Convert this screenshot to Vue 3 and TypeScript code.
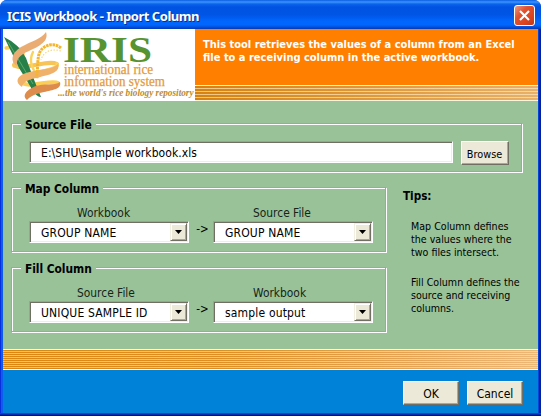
<script setup lang="ts">
import { ref } from 'vue'

interface ColumnSelect {
  label: string
  value: string
}
interface MappingGroup {
  title: string
  from: ColumnSelect
  to: ColumnSelect
}

const sourcePath = ref('E:\\SHU\\sample workbook.xls')

const groups = ref<MappingGroup[]>([
  {
    title: 'Map Column',
    from: { label: 'Workbook', value: 'GROUP NAME' },
    to: { label: 'Source File', value: 'GROUP NAME' },
  },
  {
    title: 'Fill Column',
    from: { label: 'Source File', value: 'UNIQUE SAMPLE ID' },
    to: { label: 'Workbook', value: 'sample output' },
  },
])

const tips: string[][] = [
  ['Map Column defines', 'the values where the', 'two files intersect.'],
  ['Fill Column defines the', 'source and receiving', 'columns.'],
]
</script>

<template>
  <div class="window">
    <header class="titlebar">
      <span class="title">ICIS Workbook - Import Column</span>
      <button class="close" aria-label="Close">
        <svg width="19" height="19" viewBox="0 0 19 19">
          <path d="M5 5 L14 14 M14 5 L5 14" stroke="#fff" stroke-width="2.1" />
        </svg>
      </button>
    </header>

    <main class="content">
      <section class="banner">
        <svg class="logo" width="192" height="72" viewBox="3 29 192 72">
          <g fill="none" stroke-linecap="round">
            <path d="M6 48 C16 46 24 50 23 55 C21 60 13 61 14 66" stroke="#fbcf55" stroke-width="3.4" />
            <path d="M14 65 C20 72 47 59 57 64" stroke="#f7c458" stroke-width="4" />
            <path d="M57 64 C62 70 20 73 20 80" stroke="#fbd35c" stroke-width="3.4" />
            <path d="M20 81 C27 90 50 79 58 83" stroke="#fbcf55" stroke-width="4" />
            <path d="M33 52 C29 60 31 67 38 77" stroke="#fbd35c" stroke-width="2.4" />
          </g>
          <path d="M4 37 Q19 44 26 58 Q32 75 41 97 Q37 97 33 91 Q26 79 19 68 Q12 53 4 37Z" fill="#26804a" />
          <path d="M8 42 L33 84" stroke="#79b878" stroke-width=".7" />
          <path d="M46 32 C49 41 40 46 29 51 C19 55 16 60 17 66 C10 62 11 53 21 47 C32 41 41 39 46 32Z" fill="#eaac72" />
          <path d="M58 64 C61 73 48 75 36 78 C26 80 23 83 22 87 C15 83 16 76 26 73 C38 69 52 70 58 64Z" fill="#f0b26a" />
          <path d="M60 82 C62 89 53 90 44 92 C35 94 31 96 27 100 C21 95 28 89 36 86 C44 83 54 86 60 82Z" fill="#dd8c4c" />
          <path d="M61 48 C55 43 47 44 42 49 C36 55 39 67 36 78" fill="none" stroke="#f5b52d" stroke-width="3" stroke-dasharray="2.6 .7" />
          <path d="M61 51 C51 48 43 52 41 60" fill="none" stroke="#f9d979" stroke-width="1.2" stroke-dasharray="1.5 1.5" />
          <text class="logo-name" x="63" y="62" textLength="89" lengthAdjust="spacingAndGlyphs">IRIS</text>
          <text class="logo-line" x="64" y="74" textLength="89" lengthAdjust="spacingAndGlyphs">international rice</text>
          <text class="logo-line" x="64" y="86" textLength="101" lengthAdjust="spacingAndGlyphs">information system</text>
          <text class="logo-tag" x="58" y="95.5" textLength="135.5" lengthAdjust="spacingAndGlyphs">...the world's rice biology repository</text>
        </svg>
        <div class="banner-side">
          <p class="intro">This tool retrieves the values of a column from an Excel<br />file to a receiving column in the active workbook.</p>
          <div class="stripes stripes-top"></div>
        </div>
      </section>

      <section class="form">
        <div class="group source-group">
          <span class="legend">Source File</span>
          <div class="source-row">
            <input v-model="sourcePath" class="field path" type="text" aria-label="Source File" />
            <button class="btn browse">Browse</button>
          </div>
        </div>

        <div class="columns">
          <div class="mappings">
            <div v-for="g in groups" :key="g.title" class="group map-group">
              <span class="legend">{{ g.title }}</span>
              <div class="map-row">
                <div class="picker">
                  <span class="picker-label">{{ g.from.label }}</span>
                  <div class="field combo" role="combobox">
                    <span>{{ g.from.value }}</span>
                    <i class="drop"><svg width="7" height="4" viewBox="0 0 7 4"><path d="M0 0H7L3.5 4Z" /></svg></i>
                  </div>
                </div>
                <span class="arrow">-&gt;</span>
                <div class="picker target">
                  <span class="picker-label">{{ g.to.label }}</span>
                  <div class="field combo" role="combobox">
                    <span>{{ g.to.value }}</span>
                    <i class="drop"><svg width="7" height="4" viewBox="0 0 7 4"><path d="M0 0H7L3.5 4Z" /></svg></i>
                  </div>
                </div>
              </div>
            </div>
          </div>
          <aside class="tips">
            <h2>Tips:</h2>
            <p v-for="(tip, i) in tips" :key="i">
              <span v-for="line in tip" :key="line">{{ line }}</span>
            </p>
          </aside>
        </div>
      </section>

      <div class="stripes stripes-bottom"></div>
      <footer class="actions">
        <button class="btn">OK</button>
        <button class="btn">Cancel</button>
      </footer>
    </main>
  </div>
</template>

<style>
body {
  background: #fff;
  overflow: hidden;
}
</style>

<style scoped>
* {
  box-sizing: border-box;
}
.window {
  width: 541px;
  height: 416px;
  display: flex;
  flex-direction: column;
  padding: 0 3px 3px;
  border-radius: 7px 7px 0 0;
  overflow: hidden;
  background:
    linear-gradient(#0046d8 0 1px, #0029b0 1px 2px, #00138c 2px) bottom / 100% 3px no-repeat,
    linear-gradient(90deg, #0831d9 0 1px, #0c5cf0 1px 3px, #0046d8 3px 538px, #0046d8 538px 539px, #001ea0 539px);
  font-family: 'DejaVu Sans Condensed', 'DejaVu Sans', sans-serif;
  font-size: 12px;
  color: #000;
}
.titlebar {
  flex: none;
  height: 29px;
  margin: 0 -3px;
  padding: 2px 6px 0 7px;
  display: flex;
  align-items: center;
  justify-content: space-between;
  background: linear-gradient(#0a5ce0 0, #3a95ff 2px, #0b64ec 4px, #0053e1 7px, #0055e6 15px, #0066fd 21px, #0066ff 25px, #0050dd 27px, #0039b5 29px);
}
.title {
  color: #fff;
  font: 700 13px/20px 'Noto Sans', sans-serif;
  letter-spacing: -0.47px;
  text-shadow: 1px 1px #0a318f;
  white-space: nowrap;
}
.close {
  width: 21px;
  height: 21px;
  padding: 0;
  display: flex;
  border: 1px solid #fff;
  border-radius: 3px;
  background: linear-gradient(135deg, #eb9a82, #df5330 35%, #dc4420 70%, #b93a19);
}
.content {
  flex: 1;
  display: flex;
  flex-direction: column;
  background: #0082d8;
}
.banner {
  flex: none;
  height: 72px;
  display: flex;
  background: #fff;
}
.logo {
  flex: none;
  display: block;
}
.logo-name {
  font: 700 36px 'Liberation Serif', serif;
  fill: #579331;
}
.logo-line {
  font: 14px 'Liberation Serif', serif;
  fill: #e39a3c;
  stroke: #e39a3c;
  stroke-width: 0.25px;
}
.logo-tag {
  font: italic 700 10px 'Liberation Serif', serif;
  fill: #b98b35;
}
.banner-side {
  flex: 1;
  display: flex;
  flex-direction: column;
  background: #ff8000;
}
.intro {
  flex: 1;
  margin: 0;
  padding: 9px 0 0 8px;
  color: #fff;
  font-weight: 700;
  font-size: 11px;
  line-height: 13px;
  white-space: nowrap;
}
.stripes {
  flex: none;
  border-top: 1px solid #fff5dc;
  border-bottom: 1px solid #fff5dc;
}
.stripes-top {
  height: 16px;
  background: repeating-linear-gradient(transparent 0 2px, rgba(255, 236, 200, 0.65) 2px 3px), linear-gradient(90deg, #d6820f, #dd9430 40%, #e8b068);
}
.stripes-bottom {
  height: 21px;
  background: repeating-linear-gradient(transparent 0 1px, rgba(255, 232, 190, 0.6) 1px 2px), linear-gradient(90deg, #dc860f, #df8f22 40%, #e5a251 75%, #edb775);
}
.form {
  flex: none;
  height: 248px;
  padding: 22px 15px 0 8px;
  background: #99c299;
}
.group {
  border: 1px solid #a6a398;
  box-shadow: inset 1px 1px #fff, 1px 1px #fff;
}
.source-group {
  width: 511px;
  height: 49px;
}
.legend {
  display: block;
  width: fit-content;
  height: 16px;
  margin: -8px 0 0 9px;
  padding: 0 4px;
  background: #99c299;
  font-weight: 700;
  font-size: 11.9px;
  letter-spacing: -0.05px;
  line-height: 18px;
}
.source-row {
  display: flex;
  align-items: flex-start;
  gap: 8px;
  padding: 9px 0 0 17px;
}
.field {
  height: 22px;
  border: 1px solid;
  border-color: #a39f94 #fff #fff #a39f94;
  box-shadow: inset 1px 1px #716f64, inset -1px -1px #f1efe2;
  background: #fff;
}
.path {
  width: 424px;
  padding: 3px 11px 1px;
  font: inherit;
  letter-spacing: 0.07px;
  color: #000;
  outline: none;
}
.btn {
  width: 56px;
  height: 24px;
  padding: 1px 0 0;
  border: 1px solid;
  border-color: #fff #716f64 #716f64 #fff;
  box-shadow: inset -1px -1px #aca899;
  background: #ece9d8;
  font: inherit;
  color: #000;
}
.browse {
  width: 48px;
  padding-top: 2px;
  padding-right: 1px;
  font-size: 10.8px;
}
.columns {
  display: flex;
  margin-top: 15px;
}
.mappings {
  display: flex;
  flex-direction: column;
  gap: 15px;
  width: 376px;
}
.map-group {
  width: 375px;
  height: 65px;
}
.map-row {
  display: flex;
  align-items: flex-end;
  padding: 9px 0 0 17px;
}
.picker {
  width: 160px;
}
.picker-label {
  display: block;
  height: 16px;
  padding-left: 48px;
  font-size: 11.9px;
  line-height: 16px;
  color: #16241a;
}
.target .picker-label {
  padding-left: 40px;
}
.combo {
  display: flex;
  align-items: center;
  justify-content: space-between;
  padding: 0 0 0 11px;
  line-height: 20px;
  letter-spacing: 0.17px;
  white-space: nowrap;
}
.combo span {
  padding-top: 2px;
}
.drop {
  width: 17px;
  height: 18px;
  margin: 1px;
  display: flex;
  align-items: center;
  justify-content: center;
  background: #ece9d8;
  border: 1px solid;
  border-color: #f1efe2 #716f64 #716f64 #f1efe2;
  box-shadow: inset 1px 1px #fff, inset -1px -1px #aca899;
}
.arrow {
  width: 24px;
  height: 22px;
  padding-left: 3px;
  text-align: center;
  font-size: 11.5px;
  line-height: 16px;
}
.tips {
  padding: 2px 0 0 16px;
  font-size: 10.6px;
  line-height: 13px;
  white-space: nowrap;
}
.tips h2 {
  margin: 0 0 17px;
  font-size: 11.6px;
  line-height: 14px;
}
.tips p {
  margin: 0 0 17px;
  padding-left: 8px;
}
.tips p span {
  display: block;
}
.actions {
  flex: 1;
  display: flex;
  justify-content: flex-end;
  align-items: flex-start;
  gap: 8px;
  padding: 11px 15px 0 0;
}
</style>
